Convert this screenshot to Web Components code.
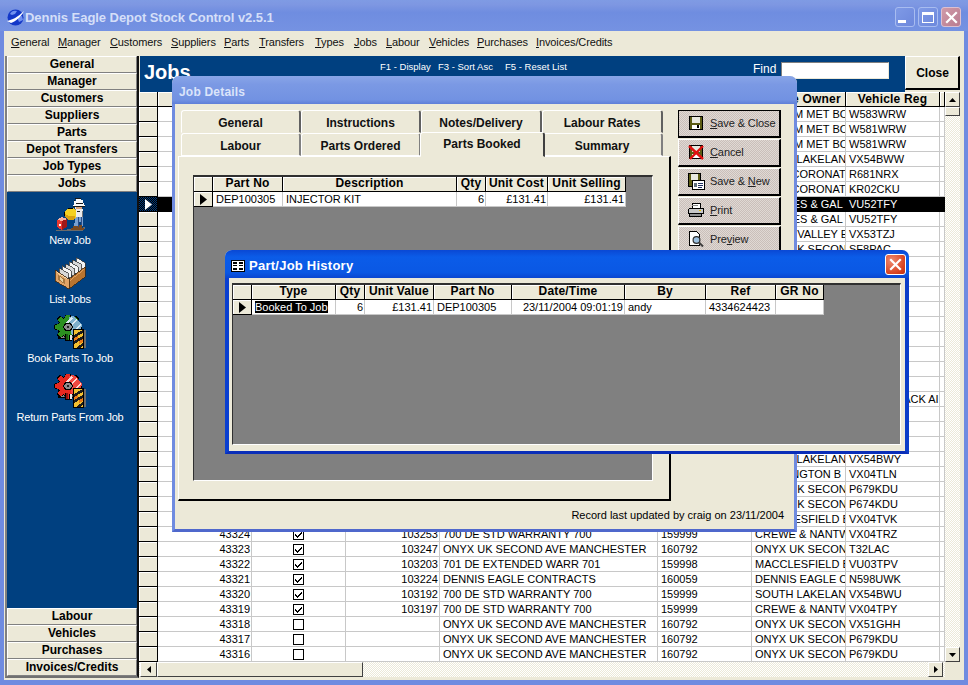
<!DOCTYPE html>
<html><head><meta charset="utf-8"><title>Dennis Eagle Depot Stock Control</title>
<style>
html,body{margin:0;padding:0;width:968px;height:685px;overflow:hidden;background:#7088dc;font:11px "Liberation Sans",Arial,sans-serif;color:#000}
</style></head><body>
<main-window></main-window>
<script>
const BASE=`*{box-sizing:border-box}`;
function def(name,css,html,extra){
  class C extends HTMLElement{
    constructor(){super();this.attachShadow({mode:'open'}).innerHTML=`<style>${BASE}${css}</style>${typeof html==='function'?html(this):html}`;}
  }
  if(extra)Object.assign(C.prototype,extra);
  customElements.define(name,C);
}
function cards(){let s='';for(let i=5;i>=0;i--){const x=5+i*3.4,y=11-i*2.1;
  s+=`<polygon points="${x},${y} ${x+9},${y+5} ${x+9},${y+13} ${x},${y+8}" fill="${i%2?'#f4f4f4':'#d8d8d8'}" stroke="#3a3a3a" stroke-width=".8"/>`;}return s;}
const ICON={
 floppy:`<svg width="16" height="16" viewBox="0 0 16 16" shape-rendering="crispEdges"><rect x="1" y="1" width="14" height="14" fill="#000"/><rect x="2" y="2" width="12" height="12" fill="#5c5c14"/><rect x="4" y="2" width="8" height="6" fill="#e8e8e0"/><rect x="4" y="10" width="8" height="4" fill="#fff"/><rect x="9" y="10" width="2" height="3" fill="#000"/></svg>`,
 cancel:`<svg width="16" height="16" viewBox="0 0 16 16"><g shape-rendering="crispEdges"><rect x="1" y="1" width="14" height="14" fill="#000"/><rect x="2" y="2" width="12" height="12" fill="#5c5c14"/><rect x="4" y="2" width="8" height="6" fill="#e8e8e0"/><rect x="4" y="10" width="8" height="4" fill="#fff"/></g><path d="M1 2 15 15M15 2 2 15" stroke="#e01010" stroke-width="2.4"/></svg>`,
 savenew:`<svg width="18" height="18" viewBox="0 0 18 18" shape-rendering="crispEdges"><rect x="1" y="1" width="13" height="14" fill="#000"/><rect x="2" y="2" width="11" height="12" fill="#5c5c14"/><rect x="4" y="2" width="7" height="6" fill="#e8e8e0"/><rect x="5" y="8" width="13" height="10" fill="#000"/><rect x="6" y="9" width="11" height="8" fill="#fff"/><rect x="7" y="11" width="3" height="4" fill="#607080"/><rect x="11" y="11" width="5" height="1" fill="#203060"/><rect x="11" y="13" width="5" height="1" fill="#203060"/><rect x="11" y="15" width="4" height="1" fill="#203060"/></svg>`,
 print:`<svg width="17" height="16" viewBox="0 0 17 16" shape-rendering="crispEdges"><path d="M5 1h8v5H5z" fill="#fff" stroke="#000"/><path d="M3 6h13v5H1V8z" fill="#c8c8c8" stroke="#000"/><path d="M2.5 11h12v3h-12z" fill="#909090" stroke="#000"/><rect x="12" y="8" width="2" height="1" fill="#e0c000"/><rect x="5" y="3" width="6" height="1" fill="#888"/></svg>`,
 preview:`<svg width="17" height="18" viewBox="0 0 17 18"><path d="M2.5 1.5h7l3 3v11h-10z" fill="#fff" stroke="#000" shape-rendering="crispEdges"/><circle cx="9.5" cy="10" r="3.4" fill="#9cc0e0" stroke="#303030" stroke-width="1.2"/><path d="M12 12.5l4 4" stroke="#404040" stroke-width="2"/></svg>`,
 worker:`<svg width="34" height="34" viewBox="0 0 34 34" shape-rendering="crispEdges">
  <path d="M3 33h11v-1h16v-2h2v2h-2v2H3z" fill="#6a6a6a"/>
  <path d="M22 19h8v10h-2v-4h-2v5h-5v-4h1z" fill="#78a0d0"/><path d="M25 20h1v10h-1zM28 20h1v8h-1z" fill="#2c4c84"/>
  <path d="M22 10h7l1 4v6h-8z" fill="#ececec"/><path d="M22 12h1v8h-1zM29 14h1v6h-1z" fill="#777"/><path d="M24 14h3v1h-3z" fill="#202020"/>
  <path d="M21 4h2V2h5v1h2v3h1v2h1v1H20V8h1z" fill="#fafafa"/><path d="M20 9h12v1H20zM22 1h6v1h-6zM21 3h1v1h-1zM23 6h7v1h-7z" fill="#181818"/>
  <path d="M23 10h6v2h-6z" fill="#d8a078"/>
  <path d="M15 11h5l3 3v6l-3 3h-4l-5-4v-4z" fill="#f4d020"/><path d="M11 16l5 3h6v3l-2 1h-4l-5-4z" fill="#d8a010"/><path d="M15 11h5v1h-5zM11 15h1v4h-1z" fill="#000"/>
  <path d="M20 29h5v1h1v3h-8v-2h2zM26 28h3v3h2v2h-5z" fill="#7a4a20"/>
  <path d="M4 23l5-3 5 2v8l-5 3-5-3z" fill="#e83830"/><path d="M9 24l5-2v8l-5 3z" fill="#a01818"/><path d="M4 23l5-3 5 2-5 2z" fill="#f8b0a0"/>
  <path d="M6 27h2v2H6z" fill="#fff"/></svg>`,
 box:`<svg width="32" height="32" viewBox="0 0 32 32" shape-rendering="crispEdges">
  <polygon points="1,13 14,21 14,31 1,23" fill="#000"/>
  ${cards()}
  <polygon points="1,13 15,22 15,32 1,24" fill="#e0a468" stroke="#402810" stroke-width=".8"/>
  <polygon points="15,22 31,10 31,20 15,32" fill="#b87430" stroke="#402810" stroke-width=".8"/>
  <polygon points="3,15 13,21 13,22 3,16" fill="#f8d8a8"/>
  <polygon points="16,23 30,12 30,13 16,24" fill="#e0a060"/>
  <polygon points="4,18 11,22 11,27 4,23" fill="#a87840"/><polygon points="6,20 9,22 9,25 6,23" fill="#e8d0a0"/></svg>`
};
function poly(cx,cy,ro,ri,n=8){let p=[];for(let i=0;i<n;i++){const a=i/n*Math.PI*2,w=Math.PI/n*.52;
 [[ri,a-w*1.5],[ro,a-w*.8],[ro,a+w*.8],[ri,a+w*1.5]].forEach(([r,t])=>p.push((cx+r*Math.cos(t)).toFixed(1)+','+(cy+r*Math.sin(t)).toFixed(1)));}return p.join(' ');}
function gear(main,dark,hatch,line){return `<svg width="34" height="34" viewBox="0 0 34 34" shape-rendering="crispEdges">
  <path d="M30 15h3v18H23v-2h7z" fill="#6a6a6a"/>
  <path d="M5 14h16v10H5z" fill="#000"/><path d="M6 15h14v8H6z" fill="#585858"/><path d="M6 18h5v5H6z" fill="#8a8a8a"/>
  <polygon points="${poly(15,12,14,10.5)}" fill="#000"/>
  <polygon points="${poly(15,12,12.8,9.4)}" fill="${main}"/>
  <path d="M12 19h3v7h-3z" fill="#000"/><path d="M13 19h2v6h-2z" fill="${dark}"/><path d="M16 20h3v6h-3z" fill="#000"/><path d="M17 20h2v5h-2z" fill="#e8e8e8"/>
  <polygon points="16,2 20,1 29,10 28,14 22,21 18,19 17,10" fill="${hatch}"/>
  <path d="M18 2l2 1-6 6-1-1zM23 4l1 1-7 7-1-1zM27 9l1 1-8 8-1-1z" fill="${line}"/>
  <polygon points="12,8 18,8 20,12 18,16 12,16 10,12" fill="#000"/><polygon points="13,9 17,9 19,12 17,15 13,15 11,12" fill="#8c8c8c"/><path d="M14 11h2v2h-2z" fill="#222"/>
  <path d="M20 14h11v20H20z" fill="#000"/><path d="M21 15h9v18h-9z" fill="#f2c030"/>
  <polygon points="21,20 30,15 30,18 21,23" fill="#1c1c1c"/><polygon points="21,26 30,21 30,24 21,29" fill="#1c1c1c"/><polygon points="23,33 30,28 30,31 27,33" fill="#1c1c1c"/>
  <polygon points="21,23 25,21 25,24 21,26" fill="#e87818"/><polygon points="26,26 30,24 30,27 26,29" fill="#e87818"/></svg>`;}
const X_SVG=`<svg width="13" height="13" viewBox="0 0 13 13"><path d="M2 2 11 11M11 2 2 11" stroke="#fff" stroke-width="2.2" stroke-linecap="square"/></svg>`;

def('title-bar',`
 :host{display:flex;align-items:center;height:31px;padding:3px 7px 0 7px;background:linear-gradient(180deg,#7f9be4 0,#7e97e2 15%,#6f8de0 40%,#7592e2 100%);color:#d5dff8;font:bold 13px "Liberation Sans",Arial,sans-serif;letter-spacing:-.05px}
 .g{width:17px;height:17px;margin-right:1px;flex:none}
 .t{flex:1}
 .b{flex:none;width:20px;height:20px;margin-left:3px;border-radius:3px;border:1px solid #a8bcf0;display:flex;align-items:center;justify-content:center;background:linear-gradient(135deg,#7f9ae6,#6d88dc)}
 .c{background:linear-gradient(135deg,#d09aa8,#b97c90);border-color:#dcc0d0}
 .m{width:8px;height:3px;background:#fff;align-self:flex-end;margin:0 6px 3px 0}
 .x{width:12px;height:11px;border:1px solid #fff;border-top-width:3px}
`,`<svg class="g" viewBox="0 0 17 17"><circle cx="8.5" cy="8.5" r="8" fill="#1438c8"/><path d="M3 5a6 6 0 0 1 7-3l-2 3-3 1zM10 8l5-1 1 4-4 2z" fill="#7090f0"/><path d="M0 12C5 11 11 8 17 2 14 8 9 12 4 14z" fill="#fff"/></svg>
 <span class="t"><slot></slot></span>
 <span class="b"><i class="m"></i></span><span class="b"><i class="x"></i></span><span class="b c">${X_SVG}</span>`);

def('menu-bar',`:host{display:grid;grid-template-columns:47px 52px 61px 53px 35px 56px 39px 32px 43px 48px 59px auto;align-items:center;height:22px;padding:0 0 0 7px;background:#ece9d8;font:11px "Liberation Sans",Arial,sans-serif;letter-spacing:-.12px}`,`<slot></slot>`);
def('menu-item',`:host{display:block;color:#111}`,`<slot></slot>`);

def('side-button',`:host{display:flex;align-items:center;justify-content:center;height:17px;flex:none;background:#ece9d8;border:1px solid;border-color:#fff #808080 #808080 #fff;font:bold 12px "Liberation Sans",Arial,sans-serif;color:#000;padding-bottom:2px;white-space:nowrap}`,`<slot></slot>`);
def('side-action',`:host{display:flex;flex-direction:column;align-items:center;height:48px;color:#fff;font:11px/14px "Liberation Sans",Arial,sans-serif;letter-spacing:-.2px;white-space:nowrap}
 .i{height:35px;display:flex;align-items:center;justify-content:center}
 svg{display:block}`,`<div class="i"><slot name="icon"></slot></div><slot></slot>`);
def('side-bar',`:host{display:flex;flex-direction:column;width:134px;flex:none;border-left:2px solid #808080;border-bottom:2px solid #707070;border-right:2px solid #101010;background:#ece9d8}
 .p{flex:1;background:#004080;display:flex;flex-direction:column;gap:11px;padding:6px 4px 0 0}`,
 `${['General','Manager','Customers','Suppliers','Parts','Depot Transfers','Job Types','Jobs'].map(t=>`<side-button>${t}</side-button>`).join('')}
 <div class="p">
  <side-action><span slot="icon">${ICON.worker}</span>New Job</side-action>
  <side-action><span slot="icon">${ICON.box}</span>List Jobs</side-action>
  <side-action><span slot="icon">${gear('#2c9020','#185810','#7fb0cc','#dceaf4')}</span>Book Parts To Job</side-action>
  <side-action><span slot="icon">${gear('#e82820','#901010','#f04840','#ffd8d0')}</span>Return Parts From Job</side-action>
 </div>
 ${['Labour','Vehicles','Purchases','Invoices/Credits'].map(t=>`<side-button>${t}</side-button>`).join('')}`);

def('jobs-header',`:host{display:flex;height:36px;flex:none;background:#ece9d8;color:#fff}
 .b{flex:1;background:#004080;display:flex;align-items:flex-start;height:36px;margin-left:1px}
 h1{margin:4px 0 0 4px;font:bold 20px/24px "Liberation Sans",Arial,sans-serif;width:236px}
 .h{display:flex;font:9.5px/12px "Liberation Sans",Arial,sans-serif;margin-top:5px;width:373px}
 .h span:nth-child(1){width:58px}.h span:nth-child(2){width:67px}
 .f{font:12px/14px "Liberation Sans",Arial,sans-serif;margin-top:6px;width:28px}
 .i{display:block;width:108px;height:17px;margin-top:6px;background:#fff;border:1px solid;border-color:#808080 #ece9d8 #ece9d8 #808080}
 .c{width:55px;height:34px;flex:none;background:#ece9d8;color:#000;border:1px solid;border-color:#fff #000 #000 #fff;border-width:1px 2px 2px 1px;display:flex;align-items:center;justify-content:center;font:bold 12px "Liberation Sans",Arial,sans-serif;padding-left:1px}`,
 `<div class="b"><h1>Jobs</h1><div class="h"><span>F1 - Display</span><span>F3 - Sort Asc</span><span>F5 - Reset List</span></div><span class="f">Find</span><i class="i"></i></div><div class="c">Close</div>`);

const CHK=`<svg width="11" height="11" viewBox="0 0 11 11" shape-rendering="crispEdges" style="display:block"><rect x=".5" y=".5" width="10" height="10" fill="#fff" stroke="#000"/><path d="M2 5h1v1h1v1h1V6h1V5h1V4h1V3h1v2H8v1H7v1H6v1H5v1H4V8H3V7H2z" fill="#000"/></svg>`;
const UNCHK=`<svg width="11" height="11" viewBox="0 0 11 11" shape-rendering="crispEdges" style="display:block"><rect x=".5" y=".5" width="10" height="10" fill="#fff" stroke="#000"/></svg>`;
const esc=s=>String(s).replace(/&/g,'&amp;');
def('data-grid',`
 :host{display:block;background:#808080;overflow:hidden}
 :host([framed]){border:1px solid;border-color:#303030 #fff #fff #303030;border-top-width:2px}
 .r{display:flex;height:15px;font:11px/14px "Liberation Sans",Arial,sans-serif}
 .c{flex:none;height:15px;background:#fff;border-right:1px solid #c8c8c8;border-bottom:1px solid #c8c8c8;padding:0 1px 0 3px;overflow:hidden;white-space:nowrap;text-align:left}
 .right{text-align:right}
 .chk{display:flex;justify-content:center;align-items:center;padding:0}
 .h{background:#ece9d8;border-right:1px solid #000;border-bottom:1px solid #000;font:bold 12px/14px "Liberation Sans",Arial,sans-serif;letter-spacing:.2px;text-align:center;padding:0;box-shadow:inset 1px 1px 0 #fff}
 :host([framed]) .h{line-height:12px}
 .s{background:#ece9d8;border-right:1px solid #000;border-bottom:1px solid #000;padding:0;display:flex;align-items:center;justify-content:center;box-shadow:inset 1px 1px 0 #fff}
 .s svg{display:block}
 .sel .c:not(.s){background:#000;color:#fff;border-color:#000}
 .sel .s{background:conic-gradient(#000 25%,#003878 0 50%,#000 0 75%,#003878 0) 0 0/2px 2px;box-shadow:none}
 mark{background:#000;color:#fff}
`,``,{
 configure({cols,heads,aligns,rows,selected=-1,arrow=-1}){
  const cell=(v,i)=>{
   if(v==='[x]')return `<div class="c chk" style="width:${cols[i]}px">${CHK}</div>`;
   if(v==='[ ]')return `<div class="c chk" style="width:${cols[i]}px">${UNCHK}</div>`;
   const al=aligns[i]==='r'?' right':'';
   const txt=String(v).startsWith('*')?`<mark>${esc(String(v).slice(1))}</mark>`:esc(v);
   return `<div class="c${al}" style="width:${cols[i]}px">${txt}</div>`;
  };
  let h=`<div class="r">`+heads.map((t,i)=>`<div class="c h" style="width:${cols[i]}px">${esc(t)}</div>`).join('')+`</div>`;
  rows.forEach((r,n)=>{
   const tri=n===arrow?`<svg width="7" height="11" viewBox="0 0 7 11"><path d="M0 0 7 5.5 0 11z" fill="${n===selected?'#fff':'#000'}"/></svg>`:'';
   h+=`<div class="r${n===selected?' sel':''}"><div class="c s" style="width:${cols[0]}px">${tri}</div>`+r.map((v,i)=>cell(v,i+1)).join('')+`</div>`;
  });
  const st=document.createElement('div');st.innerHTML=h;
  while(st.firstChild)this.shadowRoot.appendChild(st.firstChild);
 }
});

def('scroll-button',`:host{display:flex;flex:none;align-items:center;justify-content:center;background:#ece9d8;border:1px solid;border-color:#fff #404040 #404040 #fff}`,`<slot></slot>`);
const tri={u:'M0 4 3.5 0 7 4z',d:'M0 0 7 0 3.5 4z',l:'M4 0 4 7 0 3.5z',r:'M0 0 0 7 4 3.5z'};
const tsv=k=>`<svg width="${'ud'.includes(k)?7:4}" height="${'ud'.includes(k)?4:7}"><path d="${tri[k]}"/></svg>`;
const TRACK=`background:conic-gradient(#fff 25%,#ece9d8 0 50%,#fff 0 75%,#ece9d8 0) 0 0/2px 2px`;
def('v-scroll',`:host{display:flex;flex-direction:column;${TRACK}}
 .u,.d{height:15px}.t{height:9px;flex:none}.g{flex:1}`,
 `<scroll-button class="u">${tsv('u')}</scroll-button><scroll-button class="t"></scroll-button><div class="g"></div><scroll-button class="d">${tsv('d')}</scroll-button>`);
def('h-scroll',`:host{display:flex;padding-left:1px;padding-right:2px;${TRACK}}
 .l{width:17px}.t{width:206px}.r{width:15px}.g{flex:1}`,
 `<scroll-button class="l">${tsv('l')}</scroll-button><scroll-button class="t"></scroll-button><div class="g"></div><scroll-button class="r">${tsv('r')}</scroll-button>`);

const rowsMain=(()=>{
 const blank=()=>['','','','','','',''];
 const own=(o,r)=>['','','','','',o,r];
 const R=[];
 [['DURHAM MET BO','W583WRW'],['DURHAM MET BO','W581WRW'],['DURHAM MET BO','W581WRW'],['SOUTH LAKELAN','VX54BWW'],['TOWN CORONAT','R681NRX'],['TOWN CORONAT','KR02CKU'],['GREAVES & GAL','VU52TFY'],['GREAVES & GAL','VU52TFY'],['AMBER VALLEY E','VX53TZJ'],['ONYX UK SECON','SF8PAC']].forEach(x=>R.push(own(...x)));
 for(let i=10;i<23;i++){R.push(blank());}
 R[19]=['','','','','','','STOCK BLACK AI'];
 [['SOUTH LAKELAN','VX54BWY'],['WARRINGTON B','VX04TLN'],['ONYX UK SECON','P679KDU'],['ONYX UK SECON','P674KDU'],['MACCLESFIELD B','VX04TVK']].forEach(x=>R.push(own(...x)));
 const s='ONYX UK SECOND AVE MANCHESTER',w='700 DE STD WARRANTY 700',on='ONYX UK SECON',cr='CREWE & NANTW';
 R.push([43324,'[x]',103253,w,159999,cr,'VX04TRZ']);
 R.push([43323,'[x]',103247,s,160792,on,'T32LAC']);
 R.push([43322,'[x]',103203,'701 DE EXTENDED WARR 701',159998,'MACCLESFIELD B','VU03TPV']);
 R.push([43321,'[x]',103224,'DENNIS EAGLE CONTRACTS',160059,'DENNIS EAGLE C','N598UWK']);
 R.push([43320,'[x]',103192,w,159999,'SOUTH LAKELAN','VX54BWU']);
 R.push([43319,'[x]',103197,w,159999,cr,'VX04TPY']);
 R.push([43318,'[ ]','',s,160792,on,'VX51GHH']);
 R.push([43317,'[ ]','',s,160792,on,'P679KDU']);
 R.push([43316,'[ ]','',s,160792,on,'P679KDU']);
 R.forEach(r=>r.push(''));
 return R;
})();

def('jobs-pane',`:host{display:grid;grid-template-columns:806px 15px;grid-template-rows:36px 570px 15px;width:821px;flex:none}
 jobs-header{grid-column:1/3}
 .k{background:#ece9d8}`,
 `<jobs-header></jobs-header><data-grid id="g"></data-grid><v-scroll></v-scroll><h-scroll></h-scroll><div class="k"></div>`);

def('xp-dialog',`
 :host{display:flex;flex-direction:column;position:absolute;border-radius:7px 7px 0 0;overflow:hidden;background:#ece9d8;font:11px "Liberation Sans",Arial,sans-serif}
 .t{height:28px;flex:none;display:flex;align-items:center;font:bold 12px "Liberation Sans",Arial,sans-serif;letter-spacing:.2px;padding:3px 0 0 7px}
 .b{flex:1;min-height:0;display:flex;flex-direction:column;border-style:solid;border-width:0 3px 3px 3px}
 :host([inactive]) .t{background:linear-gradient(180deg,#88a5e8 0,#7b99e4 30%,#7292e2 85%,#5f7fd8 100%);color:#dbe4fa}
 :host([inactive]) .b{border-color:#6f8be0 #6f8be0 #4f68cc #6f8be0}
 :host([active]) .t{background:linear-gradient(180deg,#0a48d4 0,#0b5ce8 25%,#0a58e4 80%,#0a46d0 100%);color:#fff;font-size:13px;padding-left:6px;letter-spacing:.25px}
 :host([active]) .b{border-width:0 4px 3px 4px;border-color:#0a3fd0 #0a3cc8 #0a2eb8 #0a3fd0}
 .lab{flex:1}
`,`<div class="t"><slot name="icon"></slot><span class="lab"><slot name="title"></slot></span><slot name="close"></slot></div><div class="b"><slot></slot></div>`);

def('tab-button',`:host{display:flex;align-items:center;justify-content:center;padding-top:2px;background:#ece9d8;border:1px solid;border-color:#fff #606060 transparent #fff;border-right-width:2px;border-radius:3px 3px 0 0;font:bold 12px "Liberation Sans",Arial,sans-serif;color:#111;white-space:nowrap}
 :host([low]){border-bottom:1px solid #fff;border-right-color:#808080}
 :host([sel]){z-index:1;margin:-1px -3px -1px -1px;padding:0 0 1px;border-right-color:#404040;position:relative}`,`<slot></slot>`);
def('tab-strip',`:host{display:grid;grid-template-columns:120px 120px 121px 121px;grid-template-rows:23px 23px;margin-left:3px;width:482px;flex:none}`,`<slot></slot>`);
def('cmd-button',`:host{display:flex;align-items:center;height:28px;flex:none;padding-bottom:2px;background:conic-gradient(#e0d9d4 25%,#cabfba 0 50%,#e0d9d4 0 75%,#cabfba 0) 0 0/2px 2px;border:1px solid;border-color:#fff #000 #000 #fff;border-width:1px 2px 2px 1px;font:11px "Liberation Sans",Arial,sans-serif;letter-spacing:-.1px;color:#222;white-space:nowrap}
 :host([def]){border-color:#000;border-width:1px 2px 2px 1px}
 .i{width:31px;flex:none;display:flex;justify-content:center;padding-left:2px}
 svg{display:block}`,h=>`<span class="i">${ICON[h.getAttribute('icon')]||''}</span><span><slot></slot></span>`);

def('job-details',`
 :host{display:contents}
 .m{display:flex;flex:1;min-height:0;gap:7px;padding:6px 0 0 3px}
 .left{width:493px;display:flex;flex-direction:column}
 .panel{width:493px;height:345px;border:1px solid;border-color:#fff #000 #000 #fff;border-width:1px 2px 2px 1px;padding:18px 16px 18px 14px;background:#ece9d8}
 .panel data-grid{height:306px;width:460px}
 .right{width:103px;display:flex;flex-direction:column;gap:1px}
 .st{height:26px;flex:none;display:flex;align-items:center;justify-content:flex-end;padding:0 10px 2px 0;font:11px "Liberation Sans",Arial,sans-serif}
`,`<xp-dialog inactive style="left:172px;top:76px;width:625px;height:456px">
 <span slot="title">Job Details</span>
 <div class="m">
  <div class="left">
   <tab-strip>
    <tab-button>General</tab-button><tab-button>Instructions</tab-button><tab-button>Notes/Delivery</tab-button><tab-button>Labour Rates</tab-button>
    <tab-button low>Labour</tab-button><tab-button low>Parts Ordered</tab-button><tab-button sel>Parts Booked</tab-button><tab-button low>Summary</tab-button>
   </tab-strip>
   <div class="panel"><data-grid framed id="g"></data-grid></div>
  </div>
  <div class="right">
   <cmd-button def icon="floppy"><u>S</u>ave &amp; Close</cmd-button>
   <cmd-button icon="cancel"><u>C</u>ancel</cmd-button>
   <cmd-button icon="savenew">Save &amp; <u>N</u>ew</cmd-button>
   <cmd-button icon="print"><u>P</u>rint</cmd-button>
   <cmd-button icon="preview">Pre<u>v</u>iew</cmd-button>
  </div>
 </div>
 <div class="st">Record last updated by craig on 23/11/2004</div>
</xp-dialog>`);

def('history-window',`
 :host{display:contents}
 .ic{display:block;margin-right:4px}
 .x{width:21px;height:21px;margin:-3px 3px 0 0;border-radius:3px;border:1px solid #fff;background:radial-gradient(circle at 30% 30%,#ee8a70,#d8421f 70%,#c03010);display:flex;align-items:center;justify-content:center}
 .w{flex:1;min-height:0;padding:5px 4px 6px 3px;display:flex}
 data-grid{flex:1}
`,`<xp-dialog active style="left:225px;top:250px;width:684px;height:204px">
 <svg slot="icon" class="ic" width="14" height="14" viewBox="0 0 14 14" shape-rendering="crispEdges"><rect x="0" y="1" width="14" height="12" fill="#000"/><rect x="1" y="2" width="12" height="10" fill="#fff"/><path d="M2 3h4v2H2zM8 3h4v2H8zM2 6h4v1H2zM8 6h4v1H8zM2 9h4v2H2zM8 9h4v2H8z" fill="#000"/></svg>
 <span slot="title">Part/Job History</span>
 <div slot="close" class="x">${X_SVG}</div>
 <div class="w"><data-grid framed id="g"></data-grid></div>
</xp-dialog>`);

def('main-window',`
 :host{display:block;position:relative;width:968px;height:685px;background:#6f8be0;overflow:hidden}
 .c{margin:0 4px;height:649px;background:#ece9d8;display:flex;flex-direction:column}
 .w{flex:1;display:flex;padding:3px 0 0 1px;min-height:0;align-items:stretch;height:627px}
 side-bar{height:622px}
 jobs-pane{height:621px}
`,`<title-bar>Dennis Eagle Depot Stock Control v2.5.1</title-bar>
 <div class="c">
  <menu-bar>
   ${[['G','eneral'],['M','anager'],['C','ustomers'],['S','uppliers'],['P','arts'],['T','ransfers'],['T','ypes'],['J','obs'],['L','abour'],['V','ehicles'],['P','urchases'],['I','nvoices/Credits']].map(a=>`<menu-item><u>${a[0]}</u>${a[1]}</menu-item>`).join('')}
  </menu-bar>
  <div class="w"><side-bar></side-bar><jobs-pane id="p"></jobs-pane></div>
 </div>
 <job-details id="jd"></job-details>
 <history-window id="hw"></history-window>`);

const root=document.querySelector('main-window').shadowRoot;
root.getElementById('p').shadowRoot.getElementById('g').configure({
 cols:[19,94,94,94,218,94,94,94,5],heads:['','','','','','','Vehicle Owner','Vehicle Reg',''],
 aligns:['','r','c','r','l','l','l','l','l'],rows:rowsMain,selected:6,arrow:6});
root.getElementById('jd').shadowRoot.getElementById('g').configure({
 cols:[19,70,174,29,62,78],heads:['','Part No','Description','Qty','Unit Cost','Unit Selling'],
 aligns:['','l','l','r','r','r'],rows:[['DEP100305','INJECTOR KIT',6,'£131.41','£131.41']],arrow:0});
root.getElementById('hw').shadowRoot.getElementById('g').configure({
 cols:[19,84,29,69,78,113,81,70,48],heads:['','Type','Qty','Unit Value','Part No','Date/Time','By','Ref','GR No'],
 aligns:['','l','r','r','l','r','l','l','l'],rows:[['*Booked To Job',6,'£131.41','DEP100305','23/11/2004 09:01:19','andy','4334624423','']],arrow:0});
</script>
</body></html>
